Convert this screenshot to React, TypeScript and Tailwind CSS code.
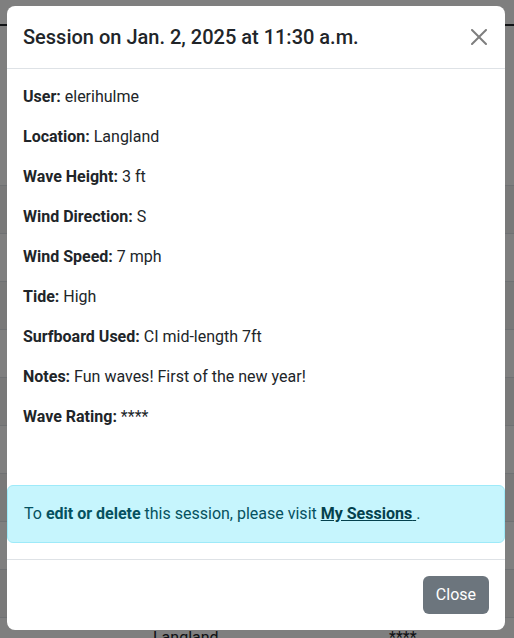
import React from 'react';

const details: { label: string; value: string }[] = [
  { label: 'User:', value: 'elerihulme' },
  { label: 'Location:', value: 'Langland' },
  { label: 'Wave Height:', value: '3 ft' },
  { label: 'Wind Direction:', value: 'S' },
  { label: 'Wind Speed:', value: '7 mph' },
  { label: 'Tide:', value: 'High' },
  { label: 'Surfboard Used:', value: 'CI mid-length 7ft' },
  { label: 'Notes:', value: 'Fun waves! First of the new year!' },
  { label: 'Wave Rating:', value: '****' },
];

const CloseIcon = () => (
  <svg width="16" height="16" viewBox="0 0 16 16" className="opacity-50">
    <path
      fill="#000"
      d="M.293.293a1 1 0 0 1 1.414 0L8 6.586 14.293.293a1 1 0 1 1 1.414 1.414L9.414 8l6.293 6.293a1 1 0 0 1-1.414 1.414L8 9.414l-6.293 6.293a1 1 0 0 1-1.414-1.414L6.586 8 .293 1.707a1 1 0 0 1 0-1.414z"
    />
  </svg>
);

// striped table rows sitting behind the backdrop
const rows = [true, false, true, false, true, false, true, false, true, false];

export default function App() {
  return (
    <div className="relative h-[638px] w-full overflow-hidden bg-white font-['Roboto',sans-serif] text-[#212529]">
      {/* page behind the modal */}
      <div className="pt-6">
        <div className="h-[2px] bg-[#212529]" />
        <div className="h-[159px]" />
        {rows.map((striped, i) => (
          <div
            key={i}
            className={`flex h-[48px] border-t border-[#dee2e6] ${striped ? 'bg-[#f2f2f2]' : 'bg-white'}`}
          >
            {i === rows.length - 1 && (
              <div className="flex w-full pt-2 text-base leading-6">
                <span className="ml-[153px] w-[236px]">Langland</span>
                <span>****</span>
              </div>
            )}
          </div>
        ))}
      </div>

      {/* backdrop */}
      <div className="absolute inset-0 bg-black/50" />

      {/* modal */}
      <div className="absolute inset-0 pt-[6px] pl-[7px]">
        <div className="w-[498px] overflow-hidden rounded-lg bg-white">
          <div className="flex items-center justify-between border-b border-[#dee2e6] p-4">
            <h5 className="text-[20px] font-medium leading-[30px]">Session on Jan. 2, 2025 at 11:30 a.m.</h5>
            <button className="-mr-[2px] flex h-6 w-6 items-center justify-center">
              <CloseIcon />
            </button>
          </div>

          <div className="px-4 pt-4 pb-10 text-base leading-6">
            {details.map((d) => (
              <p key={d.label} className="mb-4">
                <span className="font-bold">{d.label}</span> {d.value}
              </p>
            ))}
          </div>

          <div className="mb-4 rounded-md border border-[#9eeaf9] bg-[#c6f5fd] px-4 py-4 text-base leading-6 text-[#055160]">
            To <strong className="font-bold">edit or delete</strong> this session, please visit{' '}
            <a href="#" className="font-bold text-[#04414d] underline">
              My Sessions{' '}
            </a>{' '}
            .
          </div>

          <div className="flex justify-end border-t border-[#dee2e6] px-3 py-3">
            <button className="m-1 rounded-md bg-[#6c757d] px-[13px] py-1.5 text-base leading-[26px] text-white">
              Close
            </button>
          </div>
        </div>
      </div>
    </div>
  );
}
